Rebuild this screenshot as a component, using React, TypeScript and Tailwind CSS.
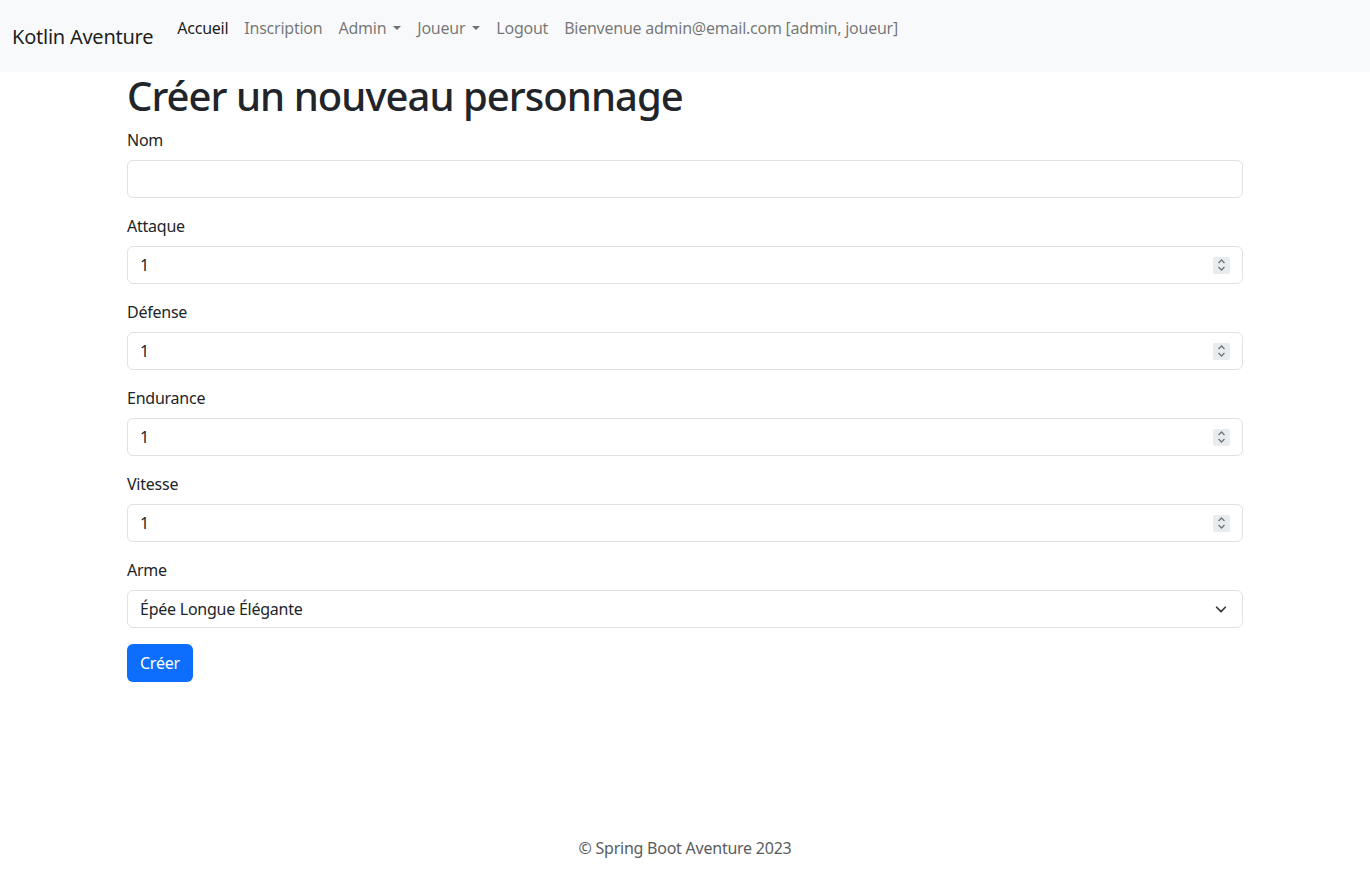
import React from "react";

const font = { fontFamily: '"Noto Sans", "Open Sans", sans-serif' };

function Spinner() {
  return (
    <div className="w-[17px] h-[17px] bg-[#e9ecef] rounded-[2px] flex items-center justify-center">
      <svg width="11" height="14" viewBox="0 0 11 14" fill="none" stroke="#6c757d" strokeWidth="1.3">
        <path d="M2.5 5 L5.5 2 L8.5 5" />
        <path d="M2.5 9 L5.5 12 L8.5 9" />
      </svg>
    </div>
  );
}

function NumberField({ label }: { label: string }) {
  return (
    <div className="mb-4">
      <label className="block mb-2 h-6 leading-6 text-[16px] text-[#212529]">{label}</label>
      <div className="h-[38px] border border-[#dee2e6] rounded-[6px] bg-white flex items-center pl-3 pr-3">
        <span className="flex-1 text-[16px] text-[#212529]">1</span>
        <Spinner />
      </div>
    </div>
  );
}

export default function App() {
  return (
    <div className="min-h-[892px] bg-white flex flex-col text-[#212529] tracking-[-0.015em]" style={font}>
      <nav className="h-[72px] bg-[#f8f9fa] flex items-start px-3">
        <span className="mt-[22px] mr-4 text-[20px] leading-[30px] text-black/90">Kotlin Aventure</span>
        <ul className="flex mt-2 text-[16px] leading-6">
          <li className="px-2 py-2 text-black/90">Accueil</li>
          <li className="px-2 py-2 text-black/55">Inscription</li>
          <li className="px-2 py-2 text-black/55 flex items-center">
            Admin
            <span className="ml-[7px] inline-block w-0 h-0 border-l-[4px] border-r-[4px] border-t-[4px] border-l-transparent border-r-transparent border-t-black/55" />
          </li>
          <li className="px-2 py-2 text-black/55 flex items-center">
            Joueur
            <span className="ml-[7px] inline-block w-0 h-0 border-l-[4px] border-r-[4px] border-t-[4px] border-l-transparent border-r-transparent border-t-black/55" />
          </li>
          <li className="px-2 py-2 text-black/55">Logout</li>
          <li className="px-2 py-2 text-black/55">Bienvenue admin@email.com [admin, joueur]</li>
        </ul>
      </nav>

      <main className="w-[1116px] mx-auto flex-1">
        <h1 className="text-[40px] leading-[48px] font-medium mb-2 tracking-[-0.024em]">Créer un nouveau personnage</h1>
        <div className="mb-4">
          <label className="block mb-2 h-6 leading-6 text-[16px]">Nom</label>
          <div className="h-[38px] border border-[#dee2e6] rounded-[6px] bg-white" />
        </div>
        <NumberField label="Attaque" />
        <NumberField label="Défense" />
        <NumberField label="Endurance" />
        <NumberField label="Vitesse" />
        <div className="mb-4">
          <label className="block mb-2 h-6 leading-6 text-[16px]">Arme</label>
          <div className="h-[38px] border border-[#dee2e6] rounded-[6px] bg-white flex items-center pl-3 pr-[14px]">
            <span className="flex-1 text-[16px]">Épée Longue Élégante</span>
            <svg width="14" height="14" viewBox="0 0 16 16" fill="none" stroke="#343a40" strokeWidth="2" strokeLinecap="round" strokeLinejoin="round">
              <path d="M3 6l5 5 5-5" />
            </svg>
          </div>
        </div>
        <button className="h-[38px] px-[13px] bg-[#0d6efd] text-white rounded-[6px] text-[16px]">Créer</button>
      </main>

      <footer className="h-[90px] flex justify-center pt-[34px] text-[16px] text-[#595c5f]">
        © Spring Boot Aventure 2023
      </footer>
    </div>
  );
}
